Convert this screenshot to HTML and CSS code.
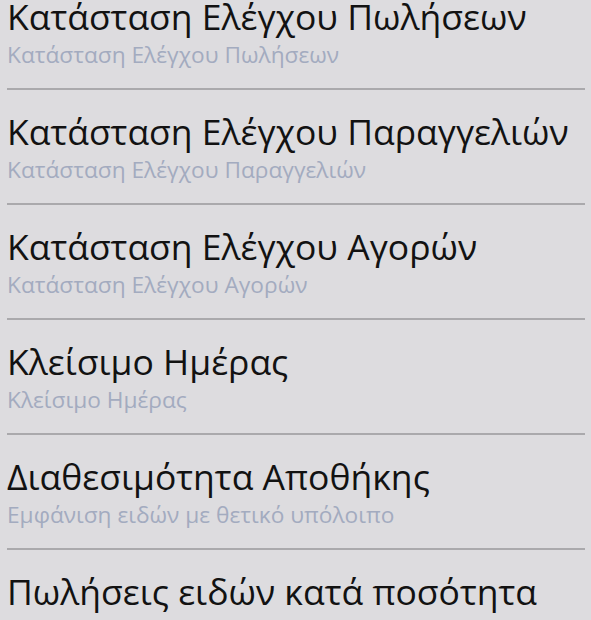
FILE: index.html
```html
<!DOCTYPE html>
<html lang="el">
<head>
    <meta charset="UTF-8">
    <title>Αναφορές</title>
    <link rel="stylesheet" href="styles.css">
</head>
<body>
    <ul class="menu">
        <li class="item">
            <div class="title">Κατάσταση Ελέγχου Πωλήσεων</div>
            <div class="sub">Κατάσταση Ελέγχου Πωλήσεων</div>
        </li>
        <li class="item">
            <div class="title">Κατάσταση Ελέγχου Παραγγελιών</div>
            <div class="sub">Κατάσταση Ελέγχου Παραγγελιών</div>
        </li>
        <li class="item">
            <div class="title">Κατάσταση Ελέγχου Αγορών</div>
            <div class="sub">Κατάσταση Ελέγχου Αγορών</div>
        </li>
        <li class="item">
            <div class="title">Κλείσιμο Ημέρας</div>
            <div class="sub">Κλείσιμο Ημέρας</div>
        </li>
        <li class="item">
            <div class="title">Διαθεσιμότητα Αποθήκης</div>
            <div class="sub">Εμφάνιση ειδών με θετικό υπόλοιπο</div>
        </li>
        <li class="item">
            <div class="title">Πωλήσεις ειδών κατά ποσότητα</div>
            <div class="sub">Πωλήσεις ειδών κατά ποσότητα</div>
        </li>
    </ul>
</body>
</html>
```

FILE: styles.css
```css
html, body {
    margin: 0;
    padding: 0;
    background: #dddcdf;
    overflow: hidden;
}

.menu {
    list-style: none;
    margin: -25px 0 0 0;
    padding: 0;
    font-family: "Open Sans", "Noto Sans", sans-serif;
}

.item {
    margin: 0 6px 0 7px;
    padding: 20px 0 19px 0;
    border-bottom: 2px solid #aaa9ac;
}

.title {
    font-size: 35.5px;
    line-height: 42px;
    color: #121212;
    white-space: nowrap;
}

.sub {
    margin-top: 4px;
    font-size: 22.7px;
    line-height: 28px;
    color: #a3abbf;
    white-space: nowrap;
}
```
